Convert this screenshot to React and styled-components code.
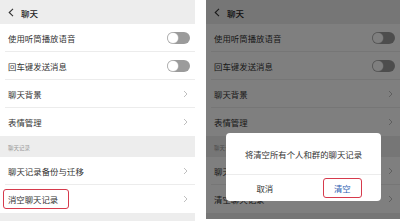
import styled, { createGlobalStyle } from "styled-components"

const GlobalStyle = createGlobalStyle`
  html, body {
    margin: 0;
    padding: 0;
    background: #ffffff;
  }
  body {
    font-family: "Noto Sans CJK SC", "Noto Sans", sans-serif;
    -webkit-font-smoothing: antialiased;
  }
`

const rows = [
  { label: "使用听筒播放语音", kind: "switch" },
  { label: "回车键发送消息", kind: "switch" },
  { label: "聊天背景", kind: "arrow" },
  { label: "表情管理", kind: "arrow" },
]

function Chevron() {
  return (
    <Styled.Chevron width="5" height="8" viewBox="0 0 5 8">
      <polyline points="1,1 4,4 1,7" fill="none" stroke="#b8b8b8" strokeWidth="0.9" />
    </Styled.Chevron>
  )
}

function Settings({ markClear }) {
  const historyRows = [
    { label: "聊天记录备份与迁移" },
    { label: markClear ? "消空聊天记录" : "清空聊天记录", mark: markClear },
  ]
  return (
    <>
      <Styled.Header>
        <svg width="6" height="9" viewBox="0 0 6 9">
          <polyline points="5,0.8 1.2,4.5 5,8.2" fill="none" stroke="#333" strokeWidth="1.1" />
        </svg>
        <Styled.HeaderTitle>聊天</Styled.HeaderTitle>
      </Styled.Header>
      <Styled.Group>
        {rows.map((r, i) => (
          <Styled.Row key={r.label} $last={i === rows.length - 1}>
            <Styled.Label>{r.label}</Styled.Label>
            {r.kind === "switch" ? (
              <Styled.Switch>
                <Styled.Knob />
              </Styled.Switch>
            ) : (
              <Chevron />
            )}
          </Styled.Row>
        ))}
      </Styled.Group>
      <Styled.Section>聊天记录</Styled.Section>
      <Styled.Group>
        {historyRows.map((r, i) => (
          <Styled.Row key={r.label} $last={i === historyRows.length - 1}>
            {r.mark ? (
              <Styled.Marked>{r.label}</Styled.Marked>
            ) : (
              <Styled.Label>{r.label}</Styled.Label>
            )}
            <Chevron />
          </Styled.Row>
        ))}
      </Styled.Group>
    </>
  )
}

export default function App() {
  return (
    <Styled.Page>
      <GlobalStyle />
      <Styled.Phone $width={195}>
        <Settings markClear />
      </Styled.Phone>
      <Styled.Phone $width={194} $height={219}>
        <Settings />
        <Styled.Dim />
        <Styled.Dialog>
          <Styled.Message>将清空所有个人和群的聊天记录</Styled.Message>
          <Styled.Actions>
            <Styled.Action>取消</Styled.Action>
            <Styled.Action>
              <Styled.ConfirmMark>清空</Styled.ConfirmMark>
            </Styled.Action>
          </Styled.Actions>
        </Styled.Dialog>
      </Styled.Phone>
    </Styled.Page>
  )
}

const Styled = {
  Page: styled.div`
    display: flex;
    gap: 11px;
    width: 400px;
    height: 221px;
    overflow: hidden;
  `,
  Phone: styled.div`
    position: relative;
    display: flex;
    flex-direction: column;
    width: ${(p) => p.$width}px;
    height: ${(p) => p.$height || 221}px;
    padding-top: 1px;
    box-sizing: border-box;
    background: #ededed;
    overflow: hidden;
  `,
  Header: styled.div`
    display: flex;
    align-items: center;
    gap: 7px;
    height: 23px;
    padding-left: 8px;
    background: #ededed;
  `,
  HeaderTitle: styled.span`
    font-size: 8.5px;
    font-weight: 500;
    color: #222;
  `,
  Group: styled.div`
    display: flex;
    flex-direction: column;
    background: #ffffff;
  `,
  Row: styled.div`
    display: flex;
    align-items: center;
    justify-content: space-between;
    height: 28px;
    padding: 0 7px 0 8px;
    box-sizing: border-box;
    position: relative;
    &::after {
      content: "";
      display: ${(p) => (p.$last ? "none" : "block")};
      position: absolute;
      left: 5px;
      right: 0;
      bottom: 0;
      height: 1px;
      background: #ececec;
    }
  `,
  Label: styled.span`
    font-size: 8.4px;
    color: #333;
    letter-spacing: 0.05px;
  `,
  Marked: styled.span`
    font-size: 8.4px;
    color: #333;
    margin-left: -5px;
    padding: 3px 10px 3px 4px;
    border: 1.3px solid #d63a4c;
    border-radius: 3px;
  `,
  Switch: styled.div`
    display: flex;
    align-items: center;
    width: 23px;
    height: 12px;
    border-radius: 6px;
    background: #9b9b9b;
    padding: 0 1px;
    box-sizing: border-box;
    margin-right: -2px;
  `,
  Knob: styled.div`
    width: 10px;
    height: 10px;
    border-radius: 50%;
    background: #ffffff;
    box-shadow: 0 0 0 0.5px #cfcfcf;
  `,
  Chevron: styled.svg`
    display: block;
  `,
  Section: styled.div`
    display: flex;
    align-items: center;
    height: 21px;
    padding: 2px 0 0 8px;
    box-sizing: border-box;
    font-size: 5.5px;
    color: #9a9a9a;
  `,
  Dim: styled.div`
    position: absolute;
    inset: 0;
    background: rgba(0, 0, 0, 0.5);
  `,
  Dialog: styled.div`
    position: absolute;
    left: 20px;
    top: 133px;
    width: 155px;
    height: 68px;
    display: flex;
    flex-direction: column;
    background: #ffffff;
    border-radius: 4px;
    overflow: hidden;
  `,
  Message: styled.div`
    display: flex;
    align-items: center;
    justify-content: center;
    height: 41px;
    font-size: 8.4px;
    color: #333;
    border-bottom: 1px solid #ececec;
  `,
  Actions: styled.div`
    display: grid;
    grid-template-columns: 1fr 1fr;
    flex: 1;
  `,
  Action: styled.div`
    display: flex;
    align-items: center;
    justify-content: center;
    font-size: 8.4px;
    color: #333;
  `,
  ConfirmMark: styled.span`
    color: #2f5fb3;
    padding: 3px 10px;
    border: 1.3px solid #d63a4c;
    border-radius: 3px;
  `,
}
